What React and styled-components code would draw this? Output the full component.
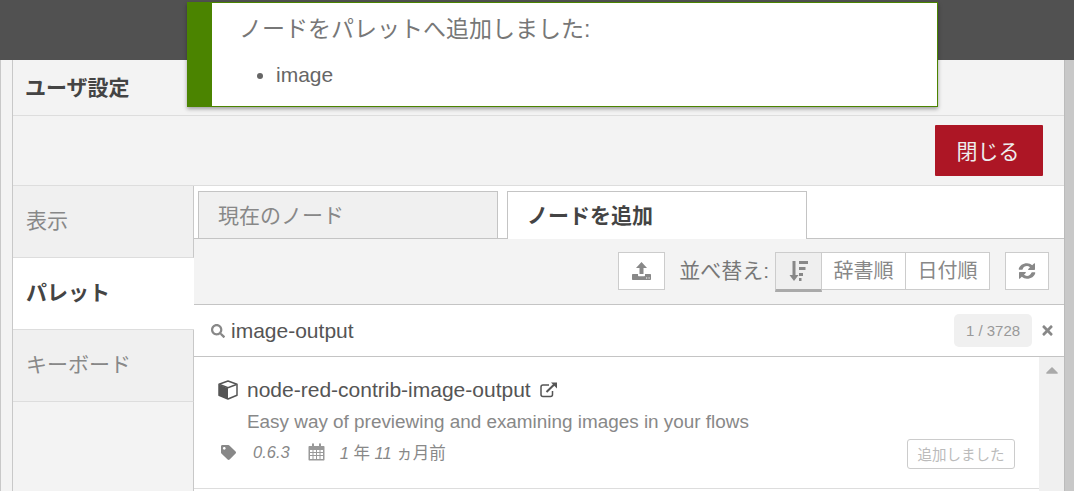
import React from "react";
import styled, { createGlobalStyle } from "styled-components";
import { FaSearch, FaTimes, FaTag, FaCaretUp } from "react-icons/fa";

const GlobalStyle = createGlobalStyle`
  html, body {
    margin: 0;
    padding: 0;
    height: 100%;
    overflow: hidden;
  }
  body {
    font-family: "Liberation Sans", "Noto Sans CJK JP", sans-serif;
    color: #555;
    background: #f3f3f3;
  }
  * { box-sizing: border-box; }
`;

const Page = styled.div`
  width: 1074px;
  height: 491px;
  position: relative;
  overflow: hidden;
  display: flex;
  flex-direction: column;
`;

const Header = styled.div`
  height: 60px;
  flex: 0 0 auto;
  background: #515151;
`;

const Stage = styled.div`
  flex: 1;
  display: flex;
  min-height: 0;
`;

const LeftEdge = styled.div`
  width: 13px;
  border-left: 1px solid #c8c8c8;
  border-right: 1px solid #c8c8c8;
  background: #f3f3f3;
`;

const RightEdge = styled.div`
  width: 10px;
  background: #c8c8c8;
  border-left: 1px solid #bbb;
`;

const Tray = styled.div`
  flex: 1;
  min-width: 0;
  display: flex;
  flex-direction: column;
  background: #f3f3f3;
`;

const TitleBar = styled.div`
  height: 56px;
  flex: 0 0 auto;
  padding: 0 0 3px 12px;
  display: flex;
  align-items: center;
  font-size: 21px;
  font-weight: bold;
  color: #444;
  border-bottom: 1px solid #ddd;
`;

const ActionBar = styled.div`
  height: 70px;
  flex: 0 0 auto;
  display: flex;
  justify-content: flex-end;
  align-items: flex-start;
  padding: 9px 21px 0 0;
  border-bottom: 1px solid #ddd;
`;

const CloseButton = styled.button`
  width: 108px;
  height: 51px;
  padding: 0 2px 2px 0;
  border: none;
  border-radius: 1px;
  background: #ad1625;
  color: #eee;
  font: inherit;
  font-size: 21px;
`;

const Body = styled.div`
  flex: 1;
  min-height: 0;
  display: flex;
`;

const Sidebar = styled.div`
  width: 181px;
  flex: 0 0 auto;
  display: flex;
  flex-direction: column;
`;

const SideTab = styled.div`
  height: 72px;
  padding: 0 0 5px 13px;
  display: flex;
  align-items: center;
  font-size: 21px;
  font-weight: ${({ $active }) => ($active ? "bold" : "normal")};
  color: ${({ $active }) => ($active ? "#444" : "#888")};
  background: ${({ $active }) => ($active ? "#fff" : "#f0f0f0")};
  border-bottom: 1px solid #ddd;
  border-right: ${({ $active }) => ($active ? "none" : "1px solid #c8c8c8")};
`;

const SideRest = styled.div`
  flex: 1;
  border-right: 1px solid #c8c8c8;
`;

const Main = styled.div`
  flex: 1;
  min-width: 0;
  display: flex;
  flex-direction: column;
  background: #fff;
`;

const TabRow = styled.div`
  height: 53px;
  flex: 0 0 auto;
  display: flex;
  gap: 9px;
  padding: 5px 0 0 4px;
  border-bottom: 1px solid #c4c4c4;
`;

const Tab = styled.div`
  width: 300px;
  height: 48px;
  padding: 0 0 3px 19px;
  display: flex;
  align-items: center;
  font-size: 21px;
  font-weight: ${({ $active }) => ($active ? "bold" : "normal")};
  color: ${({ $active }) => ($active ? "#444" : "#888")};
  background: ${({ $active }) => ($active ? "#fff" : "#f0f0f0")};
  border: 1px solid #c4c4c4;
  border-bottom: ${({ $active }) => ($active ? "none" : "1px solid #c4c4c4")};
  position: relative;
  z-index: 1;
`;

const Toolbar = styled.div`
  height: 66px;
  flex: 0 0 auto;
  display: flex;
  justify-content: flex-end;
  align-items: flex-start;
  padding: 13px 15px 0 0;
  background: #f3f3f3;
  border-bottom: 1px solid #c4c4c4;
`;

const IconButton = styled.div`
  width: ${({ $w }) => $w}px;
  height: 38px;
  display: flex;
  align-items: center;
  justify-content: center;
  background: #fff;
  border: 1px solid #ccc;
  color: #888;
`;

const SortLabel = styled.span`
  margin: 0 6px 0 14px;
  height: 38px;
  padding-bottom: 4px;
  display: flex;
  align-items: center;
  font-size: 21px;
  white-space: nowrap;
  color: #777;
`;

const SortGroup = styled.div`
  display: flex;
  margin-right: 15px;
`;

const SortButton = styled.div`
  height: ${({ $active }) => ($active ? "40px" : "38px")};
  width: ${({ $w }) => $w}px;
  display: flex;
  align-items: ${({ $active }) => ($active ? "flex-start" : "center")};
  padding-top: ${({ $active }) => ($active ? "7px" : "0")};
  padding-bottom: ${({ $active }) => ($active ? "0" : "4px")};
  justify-content: center;
  font-size: 20px;
  white-space: nowrap;
  color: #888;
  background: ${({ $active }) => ($active ? "#efefef" : "#fff")};
  border: 1px solid #ccc;
  border-left: ${({ $first }) => ($first ? "1px solid #ccc" : "none")};
  border-bottom: ${({ $active }) => ($active ? "3px solid #aaa" : "1px solid #ccc")};
`;

const SearchRow = styled.div`
  height: 52px;
  flex: 0 0 auto;
  display: flex;
  align-items: center;
  padding: 0 9px 0 17px;
  background: #fff;
  border-bottom: 1px solid #c4c4c4;
  color: #888;
`;

const SearchText = styled.span`
  flex: 1;
  margin-left: 6px;
  font-size: 21px;
  color: #555;
`;

const Count = styled.span`
  width: 78px;
  height: 33px;
  display: flex;
  align-items: center;
  justify-content: center;
  background: #f0f0f0;
  border-radius: 5px;
  font-size: 15px;
  color: #999;
  margin-right: 8px;
`;

const ListArea = styled.div`
  flex: 1;
  min-height: 0;
  display: flex;
`;

const List = styled.div`
  flex: 1;
  min-width: 0;
`;

const Scrollbar = styled.div`
  width: 25px;
  flex: 0 0 auto;
  display: flex;
  justify-content: center;
  background: #f0f0f0;
  color: #aaa;
  font-size: 20px;
  padding-top: 3px;
`;

const NodeItem = styled.div`
  height: 132px;
  padding: 20px 24px 0 24px;
  border-bottom: 1px solid #ddd;
  position: relative;
`;

const NodeName = styled.div`
  display: flex;
  align-items: center;
  height: 26px;
  font-size: 21px;
  color: #555;
  svg { flex: 0 0 auto; }
`;

const NodeDesc = styled.div`
  margin: 8px 0 0 29px;
  font-size: 18.9px;
  line-height: 22px;
  color: #888;
`;

const Meta = styled.div`
  display: flex;
  align-items: center;
  margin: 7px 0 0 3px;
  height: 24px;
  font-size: 16.5px;
  font-style: italic;
  color: #888;
`;

const MetaText = styled.span`
  margin-left: ${({ $gap }) => $gap}px;
  margin-right: ${({ $right }) => $right || 0}px;
`;

const Upright = styled.span`
  font-style: normal;
`;

const CalendarWrap = styled.span`
  display: flex;
  color: #999;
`;

const AddedBadge = styled.div`
  position: absolute;
  right: 24px;
  top: 82px;
  width: 108px;
  height: 30px;
  padding-bottom: 1px;
  display: flex;
  align-items: center;
  justify-content: center;
  border: 1px solid #ccc;
  border-radius: 3px;
  font-size: 14.5px;
  color: #bbb;
`;

const Toast = styled.div`
  position: absolute;
  left: 187px;
  top: 2px;
  width: 751px;
  height: 105px;
  display: flex;
  background: #fff;
  border: 1px solid #4b8400;
  border-left: 25px solid #4b8400;
  box-shadow: 0 2px 4px rgba(0, 0, 0, 0.35);
`;

const ToastBody = styled.div`
  padding: 11px 0 0 27px;
  color: #666;
`;

const ToastTitle = styled.div`
  font-size: 23px;
  line-height: 30px;
  color: #777;
`;

const ToastList = styled.ul`
  margin: 18px 0 0;
  padding: 0 0 0 37px;
  font-size: 21px;
  line-height: 26px;
`;

const UploadIcon = () => (
  <svg width="19" height="18" viewBox="0 0 19 18" fill="currentColor">
    <path d="M9.500 0l5.500 6h-3.500v6h-4V6H4z" />
    <path fillRule="evenodd" d="M1 12h5v1.500c0 .4.300.7.700.7h5.600c.4 0 .7-.3.700-.7V12h5c.6 0 1 .4 1 1v4c0 .6-.4 1-1 1H1c-.6 0-1-.4-1-1v-4c0-.6.400-1 1-1zm13 3.500v1h1.200v-1zm2.500 0v1h1.200v-1z" />
  </svg>
);

const SortIcon = () => (
  <svg width="20" height="22" viewBox="0 0 20 22" fill="currentColor">
    <path d="M3.500 1h3v14h3l-4.500 6-4.500-6h3z" />
    <rect x="10" y="1" width="9" height="3" />
    <rect x="10" y="7" width="6.500" height="3" />
    <rect x="10" y="13" width="4" height="3" />
    <rect x="10" y="18" width="2.500" height="3" />
  </svg>
);

const RefreshIcon = () => (
  <svg width="18" height="18" viewBox="0 0 18 18" fill="currentColor">
    <path d="M9 1.200c2 0 3.800.8 5.200 2L16 1.400c.4-.4 1-.1 1 .4V7.300c0 .4-.3.7-.7.7h-5.500c-.6 0-.9-.7-.5-1.100l1.700-1.700C11 4.500 10 4.100 9 4.100c-2 0-3.700 1.200-4.400 3.100-.1.3-.3.6-.7.6H1.300c-.4 0-.7-.4-.6-.8C1.500 3.600 4.900 1.200 9 1.200z" />
    <path d="M9 16.800c-2 0-3.800-.8-5.200-2L2 16.600c-.4.4-1 .1-1-.4V10.700c0-.4.300-.7.700-.7h5.500c.6 0 .9.700.5 1.100l-1.700 1.700c.9.700 1.900 1.100 3 1.100 2 0 3.700-1.200 4.400-3.100.1-.3.300-.6.700-.6h2.600c.4 0 .7.400.6.800-.8 3.400-4.200 5.800-8.300 5.800z" />
  </svg>
);

const CubeIcon = () => (
  <svg width="20" height="20" viewBox="0 0 20 20" fill="none">
    <path d="M10 1l9 3.200v11L10 19l-9-3.800v-11z" stroke="currentColor" strokeWidth="1.500" strokeLinejoin="round" />
    <path d="M1 4.800l9 3.400V19l-9-3.800z" fill="currentColor" />
    <path d="M1.500 4.500L10 7.700l8.500-3.200" stroke="currentColor" strokeWidth="1.500" />
  </svg>
);

const LinkIcon = () => (
  <svg width="18" height="16" viewBox="0 0 18 16" fill="none" stroke="currentColor">
    <path d="M12.500 9v3.500c0 1.200-.8 2-2 2H3c-1.200 0-2-.8-2-2V5c0-1.200.8-2 2-2h6" strokeWidth="1.500" />
    <path d="M6.500 10L15 1.800" strokeWidth="2" />
    <path d="M11 .5h6v6z" fill="currentColor" stroke="none" />
  </svg>
);

const CalendarIcon = () => (
  <svg width="17" height="18" viewBox="0 0 17 18" fill="currentColor">
    <path fillRule="evenodd" d="M1.500 3H4V1.500C4 .7 4.500.3 5 .3s1 .4 1 1.200V3h5V1.500c0-.8.500-1.200 1-1.200s1 .4 1 1.200V3h2.500c.6 0 1 .4 1 1v12.500c0 .6-.4 1-1 1h-14c-.6 0-1-.4-1-1V4c0-.6.400-1 1-1zM2 7v2h2.500V7zm3.500 0v2H8V7zM9 7v2h2.500V7zm3.500 0v2H15V7zM2 10v2h2.500v-2zm3.500 0v2H8v-2zM9 10v2h2.500v-2zm3.500 0v2H15v-2zM2 13v3h2.500v-3zm3.500 0v3H8v-3zM9 13v3h2.500v-3zm3.500 0v3H15v-3z" />
  </svg>
);

export default function App() {
  return (
    <Page>
      <GlobalStyle />
      <Header />
      <Stage>
        <LeftEdge />
        <Tray>
          <TitleBar>ユーザ設定</TitleBar>
          <ActionBar>
            <CloseButton>閉じる</CloseButton>
          </ActionBar>
          <Body>
            <Sidebar>
              <SideTab>表示</SideTab>
              <SideTab $active>パレット</SideTab>
              <SideTab>キーボード</SideTab>
              <SideRest />
            </Sidebar>
            <Main>
              <TabRow>
                <Tab>現在のノード</Tab>
                <Tab $active>ノードを追加</Tab>
              </TabRow>
              <Toolbar>
                <IconButton $w={47}>
                  <UploadIcon />
                </IconButton>
                <SortLabel>並べ替え:</SortLabel>
                <SortGroup>
                  <SortButton $first $active $w={47}>
                    <SortIcon />
                  </SortButton>
                  <SortButton $w={84}>辞書順</SortButton>
                  <SortButton $w={84}>日付順</SortButton>
                </SortGroup>
                <IconButton $w={44}>
                  <RefreshIcon />
                </IconButton>
              </Toolbar>
              <SearchRow>
                <FaSearch size={14} />
                <SearchText>image-output</SearchText>
                <Count>1 / 3728</Count>
                <FaTimes size={15} />
              </SearchRow>
              <ListArea>
                <List>
                  <NodeItem>
                    <NodeName>
                      <CubeIcon />
                      <MetaText $gap={9} $right={9}>node-red-contrib-image-output</MetaText>
                      <LinkIcon />
                    </NodeName>
                    <NodeDesc>Easy way of previewing and examining images in your flows</NodeDesc>
                    <Meta>
                      <FaTag size={15} />
                      <MetaText $gap={17} $right={18}>0.6.3</MetaText>
                      <CalendarWrap>
                        <CalendarIcon />
                      </CalendarWrap>
                      <MetaText $gap={15}>
                        1 <Upright>年</Upright> 11 <Upright>ヵ月前</Upright>
                      </MetaText>
                    </Meta>
                    <AddedBadge>追加しました</AddedBadge>
                  </NodeItem>
                </List>
                <Scrollbar>
                  <FaCaretUp />
                </Scrollbar>
              </ListArea>
            </Main>
          </Body>
        </Tray>
        <RightEdge />
      </Stage>
      <Toast>
        <ToastBody>
          <ToastTitle>ノードをパレットへ追加しました:</ToastTitle>
          <ToastList>
            <li>image</li>
          </ToastList>
        </ToastBody>
      </Toast>
    </Page>
  );
}
